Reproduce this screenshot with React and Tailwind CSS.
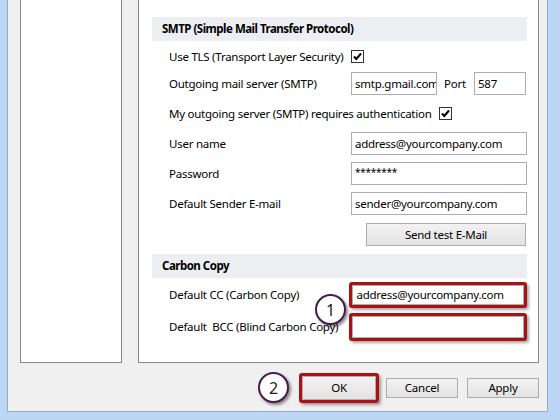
import React from "react";

function Check() {
  return (
    <div className="w-[13px] h-[13px] border border-[#333] bg-white flex items-center justify-center ml-[7px]">
      <svg width="11" height="11" viewBox="0 0 11 11">
        <path d="M2 5.5 L4.3 8 L9 2.5" fill="none" stroke="#000" strokeWidth="2" />
      </svg>
    </div>
  );
}

function Field({ children, className = "" }) {
  return (
    <div className={`h-[23px] border border-[#abadb3] bg-white flex items-center pl-[3px] overflow-hidden whitespace-nowrap ${className}`}>
      {children}
    </div>
  );
}

function Header({ children, className = "" }) {
  return (
    <div className={`h-[24px] bg-[#eceef1] flex items-center pl-[10px] font-bold tracking-[-0.5px] ${className}`}>
      {children}
    </div>
  );
}

function Btn({ children, className = "" }) {
  return (
    <div className={`border border-[#adadad] bg-gradient-to-b from-[#f2f2f2] to-[#e3e3e3] flex items-center justify-center ${className}`}>
      {children}
    </div>
  );
}

function Circle({ children, className = "" }) {
  return (
    <div className={`w-[31px] h-[31px] rounded-full border-2 border-[#4a1a4e] bg-white flex items-center justify-center text-[16px] text-[#222] shadow-[2px_2px_3px_rgba(0,0,0,0.45)] ${className}`}>
      {children}
    </div>
  );
}

export default function App() {
  return (
    <div className="w-[560px] h-[420px] bg-[#bcd6f5] flex pl-[7px] pr-[12px] pb-[8px] font-['Noto_Sans',sans-serif] text-[11.5px] tracking-[-0.25px] text-black leading-none">
      <div className="flex-1 bg-[#f0f0f0] border-l border-r border-b border-[#95abc8] flex flex-col">
        <div className="flex h-[363px] pl-[12px]">
          <div className="w-[102px] bg-white border-l border-r border-b border-[#828790]" />
          <div className="relative ml-[16px] w-[401px] bg-white border-l border-r border-b border-[#828790] flex flex-col pl-[13px] pr-[11px]">
            <Header className="mt-[17px]">SMTP (Simple Mail Transfer Protocol)</Header>

            <div className="mt-[9px] h-[13px] flex items-center pl-[17px]">
              <span>Use TLS (Transport Layer Security)</span>
              <Check />
            </div>

            <div className="mt-[9px] flex items-center pl-[17px]">
              <span className="w-[182px]">Outgoing mail server (SMTP)</span>
              <Field className="w-[86px]">smtp.gmail.com</Field>
              <span className="ml-[7px] w-[30px]">Port</span>
              <Field className="w-[52px]">587</Field>
            </div>

            <div className="mt-[12px] h-[13px] flex items-center pl-[17px]">
              <span>My outgoing server (SMTP) requires authentication</span>
              <Check />
            </div>

            <div className="mt-[12px] flex items-center pl-[17px]">
              <span className="w-[182px]">User name</span>
              <Field className="flex-1">address@yourcompany.com</Field>
            </div>
            <div className="mt-[7px] flex items-center pl-[17px]">
              <span className="w-[182px]">Password</span>
              <Field className="flex-1 text-[10px] items-start pt-[4px]">********</Field>
            </div>
            <div className="mt-[7px] flex items-center pl-[17px]">
              <span className="w-[182px]">Default Sender E-mail</span>
              <Field className="flex-1">sender@yourcompany.com</Field>
            </div>

            <div className="mt-[8px] flex justify-end">
              <Btn className="w-[160px] h-[23px] mr-[1px]">Send test E-Mail</Btn>
            </div>

            <Header className="mt-[8px]">Carbon Copy</Header>

            <div className="mt-[4px] flex items-center pl-[17px]">
              <span className="w-[181px]">Default CC (Carbon Copy)</span>
              <div className="w-[178px] h-[26px] border-[3px] border-[#a81414] rounded-[3px] shadow-[2px_2px_3px_rgba(0,0,0,0.35)] bg-white">
                <div className="h-full border border-[#abadb3] flex items-center pl-[3px] whitespace-nowrap overflow-hidden">address@yourcompany.com</div>
              </div>
            </div>
            <div className="mt-[5px] flex items-center pl-[17px]">
              <span className="w-[181px] whitespace-pre">Default  BCC (Blind Carbon Copy)</span>
              <div className="w-[178px] h-[28px] border-[3px] border-[#a81414] rounded-[3px] shadow-[2px_2px_3px_rgba(0,0,0,0.35)] bg-white">
                <div className="h-full border border-[#abadb3]" />
              </div>
            </div>

            <Circle className="absolute left-[176px] top-[294px]">1</Circle>
          </div>
        </div>

        <div className="flex items-center justify-end pr-[8px] mt-[9px]">
          <Circle className="mr-[10px]">2</Circle>
          <div className="w-[80px] h-[30px] border-[3px] border-[#a81414] rounded-[3px] shadow-[2px_2px_3px_rgba(0,0,0,0.35)]">
            <Btn className="h-full w-full">OK</Btn>
          </div>
          <Btn className="ml-[7px] w-[72px] h-[20px]">Cancel</Btn>
          <Btn className="ml-[9px] w-[72px] h-[20px]">Apply</Btn>
        </div>
      </div>
    </div>
  );
}
